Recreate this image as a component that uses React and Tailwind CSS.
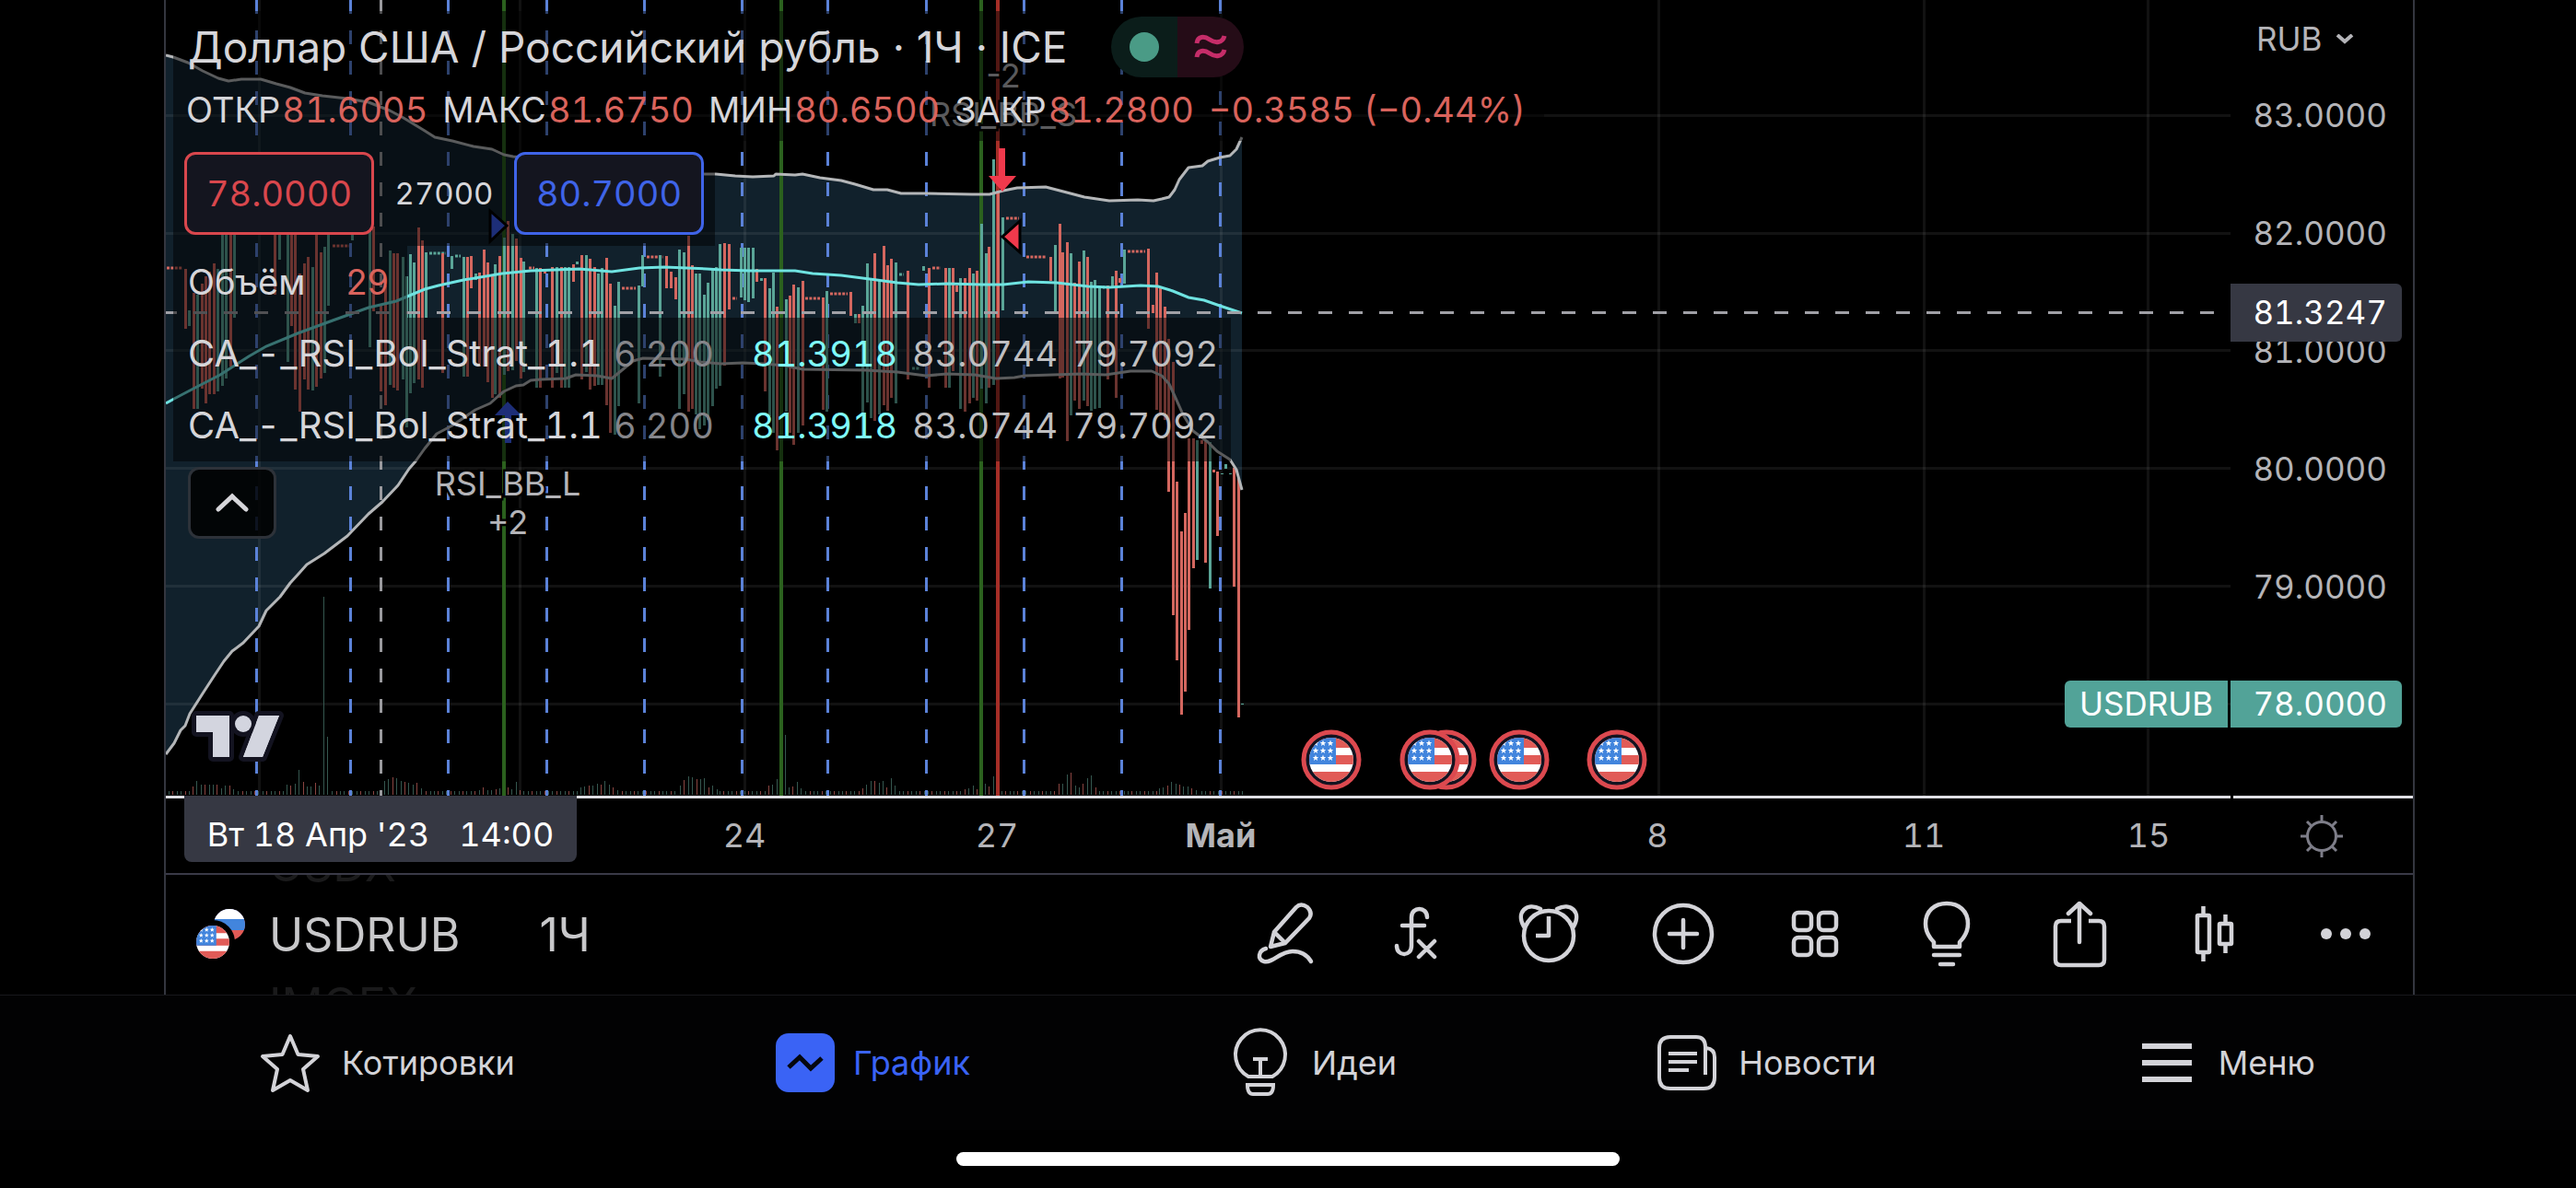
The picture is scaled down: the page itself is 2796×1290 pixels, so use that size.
import React, { useState } from 'react';

const UP = '#5aa597';
const DOWN = '#d4675f';

// [x, high, low, direction]
const bars = [
  [201, 292, 357, 0], [205, 337, 354, 1], [210, 318, 444, 0], [214, 320, 444, 1], [219, 308, 422, 0],
  [223, 300, 438, 0], [227, 295, 428, 0], [232, 286, 428, 0], [236, 292, 425, 1], [241, 250, 419, 1],
  [245, 250, 411, 1], [250, 250, 398, 0], [254, 250, 345, 1], [298, 250, 320, 0], [303, 250, 282, 1],
  [312, 250, 393, 1], [316, 250, 354, 0], [320, 250, 423, 0], [325, 297, 447, 0], [330, 286, 412, 0],
  [334, 279, 423, 0], [339, 290, 424, 1], [343, 250, 420, 0], [348, 274, 411, 0], [352, 268, 405, 1],
  [356, 250, 332, 1], [382, 250, 261, 1], [401, 250, 377, 1], [405, 246, 338, 0], [413, 330, 425, 0],
  [418, 310, 440, 0], [423, 272, 418, 1], [427, 275, 421, 0], [431, 275, 424, 0], [437, 279, 412, 1],
  [441, 300, 464, 1], [445, 276, 427, 1], [449, 285, 416, 1], [454, 247, 412, 0], [458, 261, 421, 0],
  [462, 274, 345, 1], [480, 275, 405, 0], [490, 278, 292, 1], [503, 279, 409, 1], [507, 279, 409, 0],
  [511, 278, 313, 0], [516, 297, 304, 1], [520, 296, 395, 0], [525, 271, 398, 0], [529, 285, 415, 0],
  [534, 300, 432, 0], [537, 287, 428, 1], [542, 278, 432, 0], [547, 258, 407, 1], [551, 240, 403, 0],
  [556, 254, 402, 1], [560, 259, 392, 0], [565, 280, 411, 0], [568, 284, 404, 1], [582, 291, 421, 1],
  [586, 291, 421, 0], [591, 293, 297, 0], [599, 290, 421, 0], [604, 290, 405, 1], [609, 290, 421, 0],
  [613, 290, 421, 1], [617, 290, 421, 1], [622, 287, 306, 0], [626, 284, 287, 1], [631, 277, 412, 0],
  [636, 277, 404, 1], [640, 281, 423, 0], [645, 290, 419, 0], [649, 297, 418, 1], [653, 291, 418, 1],
  [658, 280, 440, 0], [662, 308, 470, 0], [667, 332, 472, 1], [671, 306, 441, 1], [693, 310, 438, 1],
  [697, 277, 311, 1], [716, 277, 409, 1], [723, 278, 313, 0], [728, 295, 313, 0], [733, 301, 325, 0],
  [737, 271, 444, 1], [742, 274, 428, 1], [747, 256, 447, 0], [751, 288, 444, 0], [755, 297, 450, 1],
  [759, 297, 466, 1], [764, 320, 462, 1], [768, 307, 456, 1], [773, 291, 441, 1], [777, 290, 422, 1],
  [781, 265, 419, 1], [786, 264, 397, 0], [791, 265, 336, 0], [804, 269, 323, 1], [808, 269, 326, 1],
  [812, 269, 328, 1], [817, 269, 324, 1], [821, 292, 306, 0], [826, 302, 305, 1], [830, 302, 425, 0],
  [835, 313, 452, 1], [839, 296, 470, 1], [843, 333, 489, 0], [853, 325, 447, 1], [857, 321, 470, 0],
  [861, 309, 483, 0], [866, 312, 470, 1], [871, 305, 462, 0], [893, 323, 445, 0], [897, 316, 447, 1],
  [923, 317, 343, 0], [928, 341, 351, 1], [932, 341, 351, 0], [936, 332, 475, 1], [941, 286, 437, 1],
  [945, 302, 454, 1], [949, 275, 457, 0], [954, 305, 450, 1], [959, 267, 440, 0], [963, 288, 446, 0],
  [967, 281, 432, 0], [972, 285, 438, 1], [985, 294, 412, 0], [1002, 289, 294, 1], [1008, 291, 421, 0],
  [1026, 291, 421, 0], [1030, 291, 421, 1], [1034, 291, 403, 0], [1038, 310, 317, 0], [1042, 302, 444, 1],
  [1047, 302, 447, 0], [1052, 291, 438, 0], [1056, 297, 432, 1], [1060, 294, 435, 0], [1065, 243, 422, 1],
  [1070, 275, 438, 1], [1073, 268, 421, 0], [1078, 173, 418, 1], [1083, 207, 345, 0], [1088, 236, 337, 1],
  [1140, 279, 305, 0], [1145, 266, 339, 1], [1150, 243, 411, 0], [1153, 274, 410, 0], [1158, 263, 479, 0],
  [1162, 275, 451, 1], [1166, 307, 435, 0], [1171, 284, 444, 0], [1176, 272, 435, 1], [1180, 279, 441, 0],
  [1184, 306, 446, 1], [1188, 304, 444, 1], [1193, 311, 443, 1], [1202, 310, 412, 0], [1207, 300, 311, 1],
  [1211, 294, 432, 0], [1215, 302, 307, 0], [1220, 271, 308, 1], [1246, 270, 357, 0], [1251, 331, 340, 0],
  [1255, 296, 445, 0], [1259, 312, 448, 0], [1264, 333, 456, 0], [1268, 368, 534, 0], [1273, 393, 668, 0],
  [1277, 523, 717, 0], [1282, 577, 776, 0], [1286, 557, 751, 0], [1290, 476, 684, 0], [1295, 476, 617, 0],
  [1299, 478, 608, 1], [1304, 478, 482, 0], [1308, 478, 611, 0], [1313, 480, 639, 1], [1317, 510, 513, 0],
  [1321, 512, 582, 0], [1326, 514, 515, 1], [1330, 504, 509, 1], [1335, 514, 515, 1], [1339, 508, 637, 0],
  [1344, 520, 779, 0], [1348, 764, 765, 1],
];

// Quiet hours: runs of tiny bars [from, to, y, direction]
const quiet = [
  [181, 198, 291, 0], [361, 379, 267, 0], [466, 484, 275, 1], [494, 500, 278, 1], [574, 580, 291, 0],
  [675, 690, 313, 0], [702, 720, 279, 0], [795, 800, 324, 0], [874, 890, 324, 0], [901, 920, 319, 0],
  [976, 981, 298, 1], [990, 998, 400, 1], [1012, 1021, 291, 0], [1092, 1106, 237, 0], [1114, 1136, 279, 0],
  [1197, 1199, 312, 1], [1224, 1243, 273, 0],
];

const volumeHumps = [
  [209, [9, 15, 11, 11, 11, 11, 11, 7, 10, 10, 6]],
  [311, [11, 10, 12, 27, 14, 9, 9, 13, 10, 215, 63]],
  [417, [15, 17, 19, 18, 15, 14, 13, 11, 13, 7]],
  [520, [5, 8, 5, 5, 6, 7, 8, 8, 6, 14, 5]],
  [630, [8, 9, 10, 10, 12, 11, 15, 11, 8, 5]],
  [738, [10, 16, 20, 19, 17, 17, 18, 8, 10, 6]],
  [834, [10, 11, 17, 14, 65, 8, 9, 14, 7]],
  [936, [7, 11, 15, 15, 13, 15, 8, 18, 10]],
  [1047, [6, 7, 10, 6, 8, 12, 9, 20, 10]],
  [1149, [12, 12, 22, 24, 10, 8, 12, 18, 21, 8]],
  [1258, [7, 8, 10, 14, 12, 11, 9, 9, 7, 5]],
];

const upperBand =
  '180,60 188,62 204,68 220,77 237,85 248,88 262,86 283,86 300,91 315,95 331,101 350,104 377,107 400,111 423,120 438,128 461,142 472,149 491,153 514,159 534,162 547,168 557,170 620,176 700,184 765,189 777,189 798,191 817,192 840,191 842,189 863,190 871,189 890,193 913,196 928,200 948,206 963,206 978,210 1005,210 1055,211 1074,211 1089,207 1104,204 1135,203 1158,209 1177,214 1204,218 1235,217 1252,218 1261,216 1269,214 1275,206 1280,195 1290,182 1305,180 1311,175 1324,171 1335,169 1342,162 1348,149';
const lowerBand =
  '180,819 189,807 196,793 201,788 206,775 220,753 233,733 243,718 252,707 264,698 281,680 289,663 304,648 315,633 325,622 333,613 352,601 377,582 400,558 415,545 432,527 444,509 451,501 461,487 474,471 491,462 516,445 532,438 541,430 547,425 560,419 568,418 576,413 587,412 614,411 625,407 648,408 664,411 675,402 687,392 698,389 744,390 760,393 783,395 806,394 829,395 852,397 871,401 940,402 974,404 1005,408 1028,406 1058,407 1081,411 1101,410 1112,408 1173,406 1200,407 1227,403 1250,403 1261,408 1269,417 1275,430 1284,450 1295,468 1311,480 1321,490 1335,499 1342,510 1348,532';
const middleBand =
  '180,438 189,433 208,423 239,407 270,387 289,376 323,362 361,348 400,334 430,327 461,314 476,310 503,304 545,297 576,294 629,292 664,295 694,291 721,290 767,292 783,293 814,294 863,294 882,297 913,299 944,303 974,307 997,309 1028,308 1066,309 1089,309 1116,306 1147,307 1181,311 1204,312 1238,310 1257,311 1273,316 1290,323 1307,326 1324,332 1348,340';

const dayBreaks = [278, 380, 486, 593, 699, 805, 898, 1005, 1111, 1217, 1324];
const star = 'M0-3.4 .9-1.1 3.3-1 1.4.5 2.1 2.9 0 1.5-2.1 2.9-1.4.5-3.3-1-.9-1.1Z';

const UsFlag = ({ id }) => (
  <g>
    <clipPath id={id}>
      <circle r="24" />
    </clipPath>
    <g clipPath={`url(#${id})`}>
      <rect x="-24" y="-24" width="48" height="48" fill="#fff" />
      <path d="M-24-24H24V-13H-24ZM-24-5H24V5H-24ZM-24 13H24V24H-24Z" fill="#e15b57" />
      <rect x="-24" y="-24" width="29" height="29" fill="#4285dd" />
      {[-17, -9, -1].map((x) =>
        [-17, -9, -1].map((y) => <path key={`${x}${y}`} d={star} transform={`translate(${x} ${y - 1})`} fill="#fff" />)
      )}
    </g>
  </g>
);

const EventFlag = ({ x, id }) => (
  <g transform={`translate(${x} 825)`}>
    <circle r="30" fill="#131320" stroke="#dc494f" strokeWidth="5" />
    <UsFlag id={id} />
  </g>
);

const Chart = () => {
  const volumes = [];
  const taken = new Set();
  volumeHumps.forEach(([start, heights]) =>
    heights.forEach((h, i) => {
      const x = Math.round(start + i * 4.4);
      volumes.push([x, h]);
      taken.add(x);
    })
  );
  for (let i = 0; i < 264; i++) {
    const x = Math.round(183 + i * 4.43);
    if (![-2, -1, 0, 1, 2].some((d) => taken.has(x + d))) volumes.push([x, 4]);
  }

  return (
    <svg
      className="absolute inset-0 h-full w-full"
      viewBox="180 0 2241 864"
      preserveAspectRatio="xMinYMin slice"
      role="img"
      aria-label="USDRUB"
    >
      {/* Band */}
      <polygon points={`${upperBand} ${lowerBand.split(' ').reverse().join(' ')}`} fill="#11212c" />

      {/* Grid */}
      <g stroke="#fff" strokeOpacity="0.07" strokeWidth="3">
        {[125, 253, 380, 508, 636, 764].map((y) => (
          <path key={y} d={`M180 ${y + 0.5}H2421`} />
        ))}
        {[281, 564, 808, 1082, 1325, 1800, 2088, 2331].map((x) => (
          <path key={x} d={`M${x + 0.5} 0V864`} />
        ))}
      </g>

      {/* Volume */}
      {volumes.map(([x, h], i) => (
        <rect key={i} x={x} y={863 - h} width="1" height={h} fill={h > 60 || i % 3 ? '#35574f' : '#8a4541'} />
      ))}

      {/* Signals */}
      <path d="M547 0V864M848 0V864M1065 0V864" stroke="#2b611e" strokeWidth="4" />
      <path d="M1083 0V864" stroke="#a52e27" strokeWidth="4" />

      {/* Day breaks */}
      <g strokeWidth="3" strokeDasharray="15 18">
        {dayBreaks.map((x) => (
          <path key={x} d={`M${x + 0.5} 0V864`} stroke="#5b82d8" />
        ))}
        <path d="M413.5 0V864" stroke="#9a9a9e" />
      </g>

      {/* Prices */}
      {quiet.map(([from, to, y, dir]) => (
        <path
          key={from}
          d={`M${from} ${y}H${to}`}
          stroke={dir ? UP : DOWN}
          strokeWidth="3"
          strokeDasharray="3 1.4"
        />
      ))}
      {bars.map(([x, high, low, dir]) => (
        <rect key={x} x={x - 1} y={high} width="3" height={low - high} fill={dir ? UP : DOWN} />
      ))}

      <polyline points={middleBand} fill="none" stroke="#6fe3e1" strokeWidth="3" />
      <g fill="none" stroke="#b4b6b8" strokeWidth="3" strokeLinejoin="round">
        <polyline points={upperBand} />
        <polyline points={lowerBand} />
      </g>

      {/* Crosshair level */}
      <path d="M177 339.5H2412" stroke="#a0a0a6" strokeWidth="3" strokeDasharray="15 18" />

      {/* Trades */}
      <path d="M1084 161h7v30h12l-15 17-15-17h11Z" fill="#f0394c" />
      <path d="M1107 240V274L1088 257Z" fill="#f0394c" stroke="#000" strokeWidth="3" />
      <path d="M532 229V262L550 245Z" fill="#3a5cf0" stroke="#000" strokeWidth="3" />
      <path d="M548 481V451H537L551 436 566 451H555V481Z" fill="#3a5cf0" />
      <g
        className="font-['Inter',sans-serif] text-[36px]"
        textAnchor="middle"
        fill="#b4b4b8"
        stroke="#000"
        strokeWidth="5"
        paintOrder="stroke"
      >
        <text x="1089" y="95">-2</text>
        <text x="1089" y="137">RSI_BB_S</text>
        <text x="551" y="538">RSI_BB_L</text>
        <text x="551" y="580">+2</text>
      </g>

      {/* Logo */}
      <g fill="#d3d5df" stroke="#131320" strokeWidth="10" strokeLinejoin="round" paintOrder="stroke">
        <path d="M213 777H249V822H231V795H213Z" />
        <path d="M281 777H303L285 822H264Z" />
        <circle cx="264" cy="786" r="9" />
        <path d="M281 777H303L285 822H264Z" strokeWidth="0" />
      </g>

      {/* Economic events */}
      <EventFlag x={1445} id="ev1" />
      <EventFlag x={1570} id="ev2" />
      <EventFlag x={1552} id="ev3" />
      <EventFlag x={1649} id="ev4" />
      <EventFlag x={1755} id="ev5" />
    </svg>
  );
};

const Legend = () => {
  const ohlc = [
    ['ОТКР', '81.6005'],
    ['МАКС', '81.6750'],
    ['МИН', '80.6500'],
    ['ЗАКР', '81.2800'],
  ];

  return (
    <div className="relative ml-2 flex flex-col items-start pt-3 text-[38px] leading-none text-[#d6d6da]">
      <div className="flex h-[78px] items-center gap-12 bg-black/50 pl-4 whitespace-nowrap">
        <h1 className="text-[46px]">Доллар США / Российский рубль · 1Ч · ICE</h1>
        <div className="flex h-[66px] w-[144px] overflow-hidden rounded-full">
          <span className="flex flex-1 items-center justify-center bg-[#0b1d1a]">
            <span className="h-8 w-8 rounded-full bg-[#4a9b86]" />
          </span>
          <span className="flex flex-1 items-center justify-center bg-[#250c17]">
            <svg className="h-8 w-9" viewBox="0 0 36 32" fill="none" stroke="#c62d69" strokeWidth="5">
              <path d="M3 12C4 4 11 4 17 8S31 12 33 4M3 27C4 19 11 19 17 23S31 27 33 19" />
            </svg>
          </span>
        </div>
      </div>
      <div className="flex h-[63px] items-center gap-4 bg-black/50 pr-5 pb-1.5 pl-3.5 whitespace-nowrap tabular-nums">
        {ohlc.map(([label, value]) => (
          <span key={label} className="flex gap-0.5">
            {label}
            <span className="text-[#d9635c]">{value}</span>
          </span>
        ))}
        <span className="text-[#d9635c]">−0.3585 (−0.44%)</span>
      </div>
      <div className="flex h-[114px] items-center bg-black/50 pr-3 pl-3 tabular-nums">
        <button type="button" className="h-[90px] w-[206px] rounded-xl border-3 border-[#d9474d] bg-[#14151f] text-[#d9474d]">
          78.0000
        </button>
        <span className="w-[152px] text-center text-[33px]">27000</span>
        <button type="button" className="h-[90px] w-[206px] rounded-xl border-3 border-[#3f64e8] bg-[#14151f] text-[#3f64e8]">
          80.7000
        </button>
      </div>
      <div className="flex h-[78px] items-center gap-11 bg-black/50 pr-5 pl-4">
        Объём
        <span className="text-[#d9635c]">29</span>
      </div>
      {[1, 2].map((n) => (
        <div key={n} className="flex h-[78px] items-center gap-4 bg-black/50 pr-3.5 pl-4 whitespace-nowrap tabular-nums">
          <span className="w-[446px] text-[40px]">CA_-_RSI_Bol_Strat_1.1</span>
          <span className="w-[134px] text-[#85858a]">6 200</span>
          <span className="text-[#7ffbf9]">81.3918</span>
          <span className="text-[#bfbfc1]">83.0744</span>
          <span className="text-[#bfbfc1]">79.7092</span>
        </div>
      ))}
      <button
        type="button"
        aria-label="Свернуть"
        className="mt-1.5 ml-4 flex h-[78px] w-24 items-center justify-center rounded-xl border-3 border-[#2d3239] bg-black/85"
      >
        <svg className="h-6 w-10" viewBox="0 0 40 24" fill="none" stroke="#d6d6da" strokeWidth="5" strokeLinecap="round">
          <path d="M5 19 20 5 35 19" />
        </svg>
      </button>
    </div>
  );
};

const PriceScale = () => {
  const [currency, setCurrency] = useState('RUB');

  return (
    <div className="relative w-[198px] shrink-0 text-[35px] text-[#b4b4b8] tabular-nums">
      <label className="flex h-[61px] items-center gap-2 pt-6 pl-7">
        <select
          aria-label="Валюта"
          value={currency}
          onChange={(e) => setCurrency(e.target.value)}
          className="w-[78px] appearance-none bg-transparent leading-none outline-none"
        >
          <option>RUB</option>
          <option>USD</option>
        </select>
        <svg className="h-3 w-5" viewBox="0 0 20 12" fill="none" stroke="currentColor" strokeWidth="4">
          <path d="M2 1 10 8 18 1" />
        </svg>
      </label>
      {['83.0000', '82.0000', '81.0000', '80.0000', '79.0000'].map((price) => (
        <div key={price} className="flex h-32 items-center justify-end pr-7">
          {price}
        </div>
      ))}
      <div className="absolute top-[308px] left-0 flex h-[63px] w-[186px] items-center justify-end rounded-r-md bg-[#363843] pr-4 text-white">
        81.3247
      </div>
      <div className="absolute top-[739px] right-3 flex h-[51px] gap-[3px] text-white">
        <span className="flex w-[177px] items-center justify-center rounded-l-md bg-[#52a398]">USDRUB</span>
        <span className="flex w-[186px] items-center justify-end rounded-r-md bg-[#52a398] pr-4">78.0000</span>
      </div>
    </div>
  );
};

const timeLabels = [
  { text: '24', x: 808 },
  { text: '27', x: 1082 },
  { text: 'Май', x: 1325, bold: true },
  { text: '8', x: 1799 },
  { text: '11', x: 2088 },
  { text: '15', x: 2332 },
];

const TimeScale = () => (
  <div className="flex h-[84px] gap-[3px] text-[36px] leading-none text-[#b4b4b8] tabular-nums">
    <div className="relative flex-1 border-t-3 border-[#dfdfe5]">
      {timeLabels.map(({ text, x, bold }) => (
        <span
          key={text}
          className={bold ? 'absolute top-[22px] -translate-x-1/2 font-bold' : 'absolute top-[22px] -translate-x-1/2'}
          style={{ left: `${((x - 180) / 2241) * 100}%` }}
        >
          {text}
        </span>
      ))}
      <div className="absolute -top-[3px] left-5 flex h-[72px] w-[426px] items-center justify-center gap-8 rounded-b-lg bg-[#363843] pt-3 whitespace-nowrap text-white">
        <span>Вт 18 Апр '23</span>
        <span>14:00</span>
      </div>
    </div>
    <div className="flex w-[195px] items-center justify-center border-t-3 border-[#dfdfe5] pr-1">
      <button type="button" aria-label="Настройки">
        <svg className="h-12 w-12" viewBox="-24 -24 48 48" fill="none" stroke="#7d7d88" strokeWidth="3">
          <circle r="15.5" />
          <path d="M0-23V-16M0 16V23M-23 0H-16M16 0H23M-16-16-11-11M16-16 11-11M-16 16-11 11M16 16 11 11" />
        </svg>
      </button>
    </div>
  </div>
);

const tools = [
  {
    label: 'Рисование',
    icon: (
      <>
        <path d="M24 33 48 6Q53 1 60 6 66 12 62 18L36 45 20 49ZM24 33 36 45" />
        <path d="M15 51C7 53 5 63 13 65 23 67 30 54 44 54 55 54 61 60 64 65" />
      </>
    ),
  },
  {
    label: 'Индикаторы',
    icon: <path d="M46 17C46 5 29 5 29 17V48C29 60 13 60 13 48M19 26H43M37 43 54 60M54 43 37 60" />,
  },
  {
    label: 'Оповещение',
    icon: (
      <>
        <circle cx="34" cy="37" r="27" />
        <path d="M7 27C-2 12 10 0 25 8M61 27C70 12 58 0 43 8" />
        <path d="M34 16V37H20" strokeLinecap="butt" />
      </>
    ),
  },
  {
    label: 'Добавить',
    icon: (
      <>
        <circle cx="36" cy="35" r="31" />
        <path d="M36 20V50M21 35H51" />
      </>
    ),
  },
  {
    label: 'Макеты',
    icon: (
      <>
        <rect x="12" y="12" width="19" height="19" rx="5" />
        <rect x="39" y="12" width="19" height="19" rx="5" />
        <rect x="12" y="39" width="19" height="19" rx="5" />
        <rect x="39" y="39" width="19" height="19" rx="5" />
      </>
    ),
  },
  {
    label: 'Идея',
    icon: (
      <>
        <path d="M20 49V44C14 38 11 31 11 24 11 10 21 2 34 2S57 10 57 24C57 31 54 38 48 44V49Z" />
        <path d="M20 58H48M27 68H41" />
      </>
    ),
  },
  {
    label: 'Поделиться',
    icon: (
      <>
        <path d="M25 21H14Q8 21 8 27V63Q8 69 14 69H55Q61 69 61 63V27Q61 21 55 21H44" strokeLinecap="butt" />
        <path d="M34 2V44M22 13 34 2 46 13" />
      </>
    ),
  },
  {
    label: 'Тип графика',
    icon: (
      <g strokeLinecap="butt">
        <rect x="18" y="15" width="13" height="40" rx="1" />
        <rect x="42" y="24" width="13" height="22" rx="1" />
        <path d="M24.5 5V15M24.5 55V65M48.5 14V24M48.5 46V56" />
      </g>
    ),
  },
  {
    label: 'Ещё',
    icon: (
      <g fill="currentColor" stroke="none">
        <circle cx="14" cy="35" r="6" />
        <circle cx="35" cy="35" r="6" />
        <circle cx="56" cy="35" r="6" />
      </g>
    ),
  },
];

const Toolbar = () => (
  <div className="flex h-[132px] items-center border-t-2 border-[#3a3a48] text-[#d3d3d8]">
    <svg className="ml-8 h-16 w-16 shrink-0" viewBox="0 0 64 64">
      <clipPath id="ru">
        <circle cx="37" cy="21" r="17" />
      </clipPath>
      <g clipPath="url(#ru)">
        <rect width="64" height="64" fill="#e15b57" />
        <rect width="64" height="27" fill="#4285dd" />
        <rect width="64" height="15" fill="#fff" />
      </g>
      <circle cx="19" cy="40" r="24" fill="#000" />
      <g transform="translate(19 40) scale(0.75)">
        <UsFlag id="us" />
      </g>
    </svg>
    {/* Symbol wheel, neighbours peek in above and below */}
    <div className="ml-4 flex h-full flex-col justify-center overflow-hidden text-[50px] leading-none text-[#c8c8ca]">
      <div className="flex h-[76px] shrink-0 items-center text-[#1a1a1b]">USDX</div>
      <button type="button" className="flex h-[76px] shrink-0 items-center">USDRUB</button>
      <div className="flex h-[76px] shrink-0 items-center text-[#1a1a1b]">IMOEX</div>
    </div>
    <button type="button" className="ml-[86px] text-[50px] leading-none text-[#c8c8ca]">1Ч</button>
    <div className="ml-auto flex">
      {tools.map(({ label, icon }) => (
        <button key={label} type="button" aria-label={label} className="flex w-36 justify-center">
          <svg
            className="h-18 w-18 overflow-visible"
            viewBox="0 0 72 72"
            fill="none"
            stroke="currentColor"
            strokeWidth="4.5"
            strokeLinecap="round"
            strokeLinejoin="round"
          >
            {icon}
          </svg>
        </button>
      ))}
    </div>
  </div>
);

const tabs = [
  {
    text: 'Котировки',
    icon: (
      <path
        d="M32 3 40.5 23 62 25 46 39 51 62 32 51 13 62 18 39 2 25 23.5 23Z"
        fill="none"
        stroke="currentColor"
        strokeWidth="4"
        strokeLinejoin="round"
      />
    ),
  },
  {
    text: 'График',
    active: true,
    icon: (
      <>
        <rect width="64" height="64" rx="14" fill="currentColor" />
        <path d="M14 37 26 26 38 38 50 27" fill="none" stroke="#05070f" strokeWidth="5" />
      </>
    ),
  },
  {
    text: 'Идеи',
    icon: (
      <g fill="none" stroke="currentColor" strokeWidth="4">
        <path d="M19 47A27 27 0 1 1 45 47ZM24 28H40M32 28V47" />
        <path d="M18 56H46Q46 66 40 66H24Q18 66 18 56Z" />
      </g>
    ),
  },
  {
    text: 'Новости',
    icon: (
      <g fill="none" stroke="currentColor" strokeWidth="4">
        <path d="M52 45V15Q52 4 42 4H14Q2 4 2 16V48Q2 60 14 60H50Q62 60 62 48V26Q62 17 53 16" />
        <path d="M12 22H43M12 31H43M12 40H34" />
      </g>
    ),
  },
  {
    text: 'Меню',
    icon: <path d="M5 14H59M5 32H59M5 50H59" stroke="currentColor" strokeWidth="6" />,
  },
];

const TabBar = () => (
  <nav className="flex h-[147px] items-center justify-evenly border-t border-[#17181b] bg-[#020203]">
    {tabs.map(({ text, icon, active }) => (
      <a
        key={text}
        href="#"
        className={
          active
            ? 'flex items-center gap-5 text-[36px] text-[#3a63f5]'
            : 'flex items-center gap-6 text-[36px] text-[#d3d3d8]'
        }
      >
        <svg className="h-16 w-16 overflow-visible" viewBox="0 0 64 64">
          {icon}
        </svg>
        {text}
      </a>
    ))}
  </nav>
);

const App = () => {
  return (
    <div className="flex min-h-screen flex-col bg-black font-['Inter',sans-serif]">
      <main className="mr-[175px] ml-[178px] border-x-2 border-[#34363f]">
        <div className="flex h-[864px]">
          <section className="relative min-w-0 flex-1">
            <Chart />
            <Legend />
          </section>
          <PriceScale />
        </div>
        <TimeScale />
        <Toolbar />
      </main>
      <TabBar />
      <div className="mx-auto mt-6 mb-6 h-[15px] w-[720px] rounded-full bg-white" />
    </div>
  );
};

export default App;
